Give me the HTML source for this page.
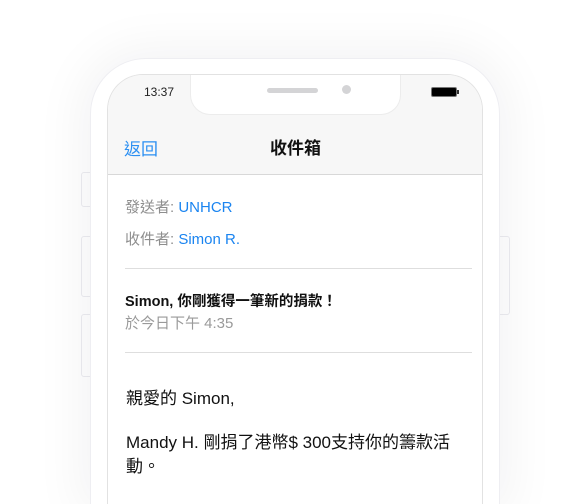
<!DOCTYPE html><html style="width:586px;height:504px;overflow:hidden"><head><meta charset="utf-8"><style>
body{margin:0;width:586px;height:504px;overflow:hidden;background:#fff;font-family:"Liberation Sans","Noto Sans CJK TC",sans-serif;position:relative}
.btn{position:absolute;background:#fff;border:1px solid #ececf0;border-radius:3px}
.body{position:absolute;left:90px;top:58px;width:410px;height:446px;background:#fff;border-radius:56px 56px 0 0;border:1px solid #eeeef2;border-bottom:none;box-sizing:border-box;box-shadow:0 0 50px 10px rgba(0,0,30,0.05)}
.scr{position:absolute;left:107px;top:74px;width:376px;height:430px;background:#fff;border-radius:36px 36px 0 0;overflow:hidden;border:1px solid #e2e2e2;border-bottom:none;box-sizing:border-box}
.hdr{position:absolute;left:0;top:0;width:100%;height:99px;background:#f7f7f7;border-bottom:1px solid #d8d8d8}
.notch{position:absolute;left:82px;top:-1px;width:209px;height:40px;background:#fff;border-radius:0 0 20px 20px;border:1px solid #ececec;border-top:none}
.t{position:absolute;white-space:nowrap}
.hr{position:absolute;left:17px;width:347px;height:1px;background:#dedede}
</style></head><body>
<div class="btn" style="left:81px;top:172px;width:12px;height:33px"></div>
<div class="btn" style="left:81px;top:236px;width:12px;height:59px"></div>
<div class="btn" style="left:81px;top:314px;width:12px;height:61px"></div>
<div class="btn" style="left:497px;top:236px;width:11px;height:77px"></div>
<div class="body"></div>
<div class="scr">
<div class="hdr"></div>
<div class="notch"></div>
<div style="position:absolute;left:159px;top:13px;width:51px;height:5px;background:#d4d4d6;border-radius:3px"></div>
<div style="position:absolute;left:234px;top:10px;width:9px;height:9px;background:#d4d4d6;border-radius:50%"></div>
<div class="t" style="left:36px;top:10px;font-size:12px;color:#222">13:37</div>
<div style="position:absolute;left:323px;top:12px;width:26px;height:10px;background:#000;border-radius:2px;border:1px solid #777;box-sizing:border-box"></div>
<div style="position:absolute;left:349px;top:15px;width:2px;height:4px;background:#333"></div>
<div class="t" style="left:16px;top:60px;font-size:17px;color:#2b8ff2">返回</div>
<div class="t" style="left:162px;top:59px;font-size:17px;color:#111;font-weight:bold">收件箱</div>
<div class="t" style="left:17px;top:121px;font-size:15px;color:#8e8e8e">發送者: <span style="color:#1a84f0">UNHCR</span></div>
<div class="t" style="left:17px;top:153px;font-size:15px;color:#8e8e8e">收件者: <span style="color:#1a84f0">Simon R.</span></div>
<div class="hr" style="top:193px"></div>
<div class="t" style="left:17px;top:215px;font-size:14.5px;color:#111;font-weight:bold">Simon, 你剛獲得一筆新的捐款！</div>
<div class="t" style="left:17px;top:237px;font-size:15px;color:#9a9a9a">於今日下午 4:35</div>
<div class="hr" style="top:277px"></div>
<div class="t" style="left:18px;top:309px;font-size:17px;color:#111">親愛的 Simon,</div>
<div class="t" style="left:18px;top:356px;font-size:17px;color:#111;line-height:24px;white-space:normal;width:340px">Mandy H. 剛捐了港幣$ 300支持你的籌款活動。</div>
</div>
</body></html>
